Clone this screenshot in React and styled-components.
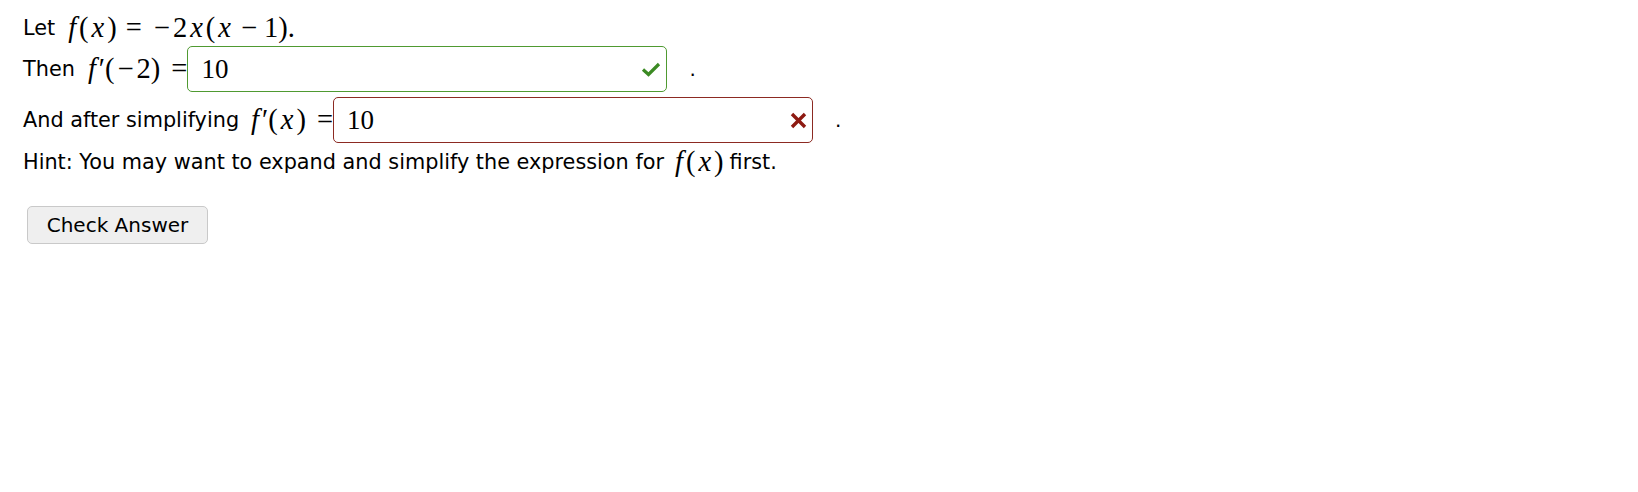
import React from 'react';
import styled, { createGlobalStyle } from 'styled-components';

const GlobalStyle = createGlobalStyle`
  html, body {
    margin: 0;
    padding: 0;
    background: #ffffff;
  }
  body {
    font-family: "DejaVu Sans", Verdana, sans-serif;
    color: #000000;
  }
`;

const Page = styled.div`
  display: flex;
  flex-direction: column;
  align-items: flex-start;
  padding: 12px 0 0 23px;
  font-size: 20.8px;
`;

const Line = styled.div`
  display: flex;
  align-items: center;
  min-height: ${({ h }) => h || 32}px;
  margin-bottom: ${({ gap }) => gap || 0}px;
  white-space: pre;
`;

const Math = styled.span`
  font-family: "Liberation Serif", "Times New Roman", serif;
  font-size: 28.5px;
  margin: 0 ${({ after }) => after || 0}px 0 ${({ before }) => before || 0}px;
  display: inline-flex;
  align-items: baseline;
`;

const Mi = styled.i`
  font-style: italic;
  padding: 0 ${({ pad }) => pad || 3}px;
`;

const Mo = styled.span`
  margin: 0 ${({ right }) => (right !== undefined ? right : 0)}px 0 ${({ left }) => left || 0}px;
`;

const AnswerBox = styled.div`
  display: flex;
  align-items: center;
  justify-content: space-between;
  box-sizing: border-box;
  width: 480px;
  height: 46px;
  padding: 0 5px 0 13px;
  border: 1px solid ${({ ok }) => (ok ? '#4f9a31' : '#8c2a22')};
  border-radius: 5px;
  background: #ffffff;
`;

const BoxValue = styled.span`
  font-family: "Liberation Serif", "Times New Roman", serif;
  font-size: 27px;
`;

const Period = styled.span`
  margin-left: 22px;
  font-size: 20px;
`;

const CheckButton = styled.button`
  margin-top: 27px;
  margin-left: 4px;
  width: 181px;
  height: 38px;
  padding: 0;
  font-family: "DejaVu Sans", Verdana, sans-serif;
  font-size: 20px;
  color: #000000;
  background: #efefef;
  border: 1px solid #c9c9c9;
  border-radius: 5px;
`;

const CheckIcon = () => (
  <svg width="20" height="15" viewBox="0 0 20 15">
    <path d="M2 7.5 L7.5 12.5 L18 2" fill="none" stroke="#3b8a23" strokeWidth="3.2" />
  </svg>
);

const CrossIcon = () => (
  <svg width="17" height="17" viewBox="0 0 17 17">
    <path d="M2 2 L15 15 M15 2 L2 15" fill="none" stroke="#8e1a12" strokeWidth="3.4" />
  </svg>
);

const FofX = () => (
  <>
    <Mi>f</Mi>
    <Mo>(</Mo>
    <Mi>x</Mi>
    <Mo>)</Mo>
  </>
);

const App = () => (
  <>
    <GlobalStyle />
    <Page>
      <Line h={32} gap={2}>
        Let
        <Math before={10}>
          <FofX />
          <Mo left={9} right={9}>=</Mo>
          <Mo left={3} right={3}>−</Mo>
          <span>2</span>
          <Mi>x</Mi>
          <Mo>(</Mo>
          <Mi>x</Mi>
          <Mo left={7} right={7}>−</Mo>
          <span>1</span>
          <Mo>).</Mo>
        </Math>
      </Line>
      <Line h={46} gap={5}>
        Then
        <Math before={10}>
          <Mi>f</Mi>
          <Mo>′</Mo>
          <Mo>(</Mo>
          <Mo left={3} right={3}>−</Mo>
          <span>2</span>
          <Mo>)</Mo>
          <Mo left={11} right={0}>=</Mo>
        </Math>
        <AnswerBox ok>
          <BoxValue>10</BoxValue>
          <CheckIcon />
        </AnswerBox>
        <Period>.</Period>
      </Line>
      <Line h={46} gap={2}>
        And after simplifying
        <Math before={9}>
          <Mi>f</Mi>
          <Mo>′</Mo>
          <Mo>(</Mo>
          <Mi>x</Mi>
          <Mo>)</Mo>
          <Mo left={11} right={0}>=</Mo>
        </Math>
        <AnswerBox>
          <BoxValue>10</BoxValue>
          <CrossIcon />
        </AnswerBox>
        <Period>.</Period>
      </Line>
      <Line h={34}>
        Hint: You may want to expand and simplify the expression for
        <Math before={8} after={6}>
          <FofX />
        </Math>
        first.
      </Line>
      <CheckButton type="button">Check Answer</CheckButton>
    </Page>
  </>
);

export default App;
